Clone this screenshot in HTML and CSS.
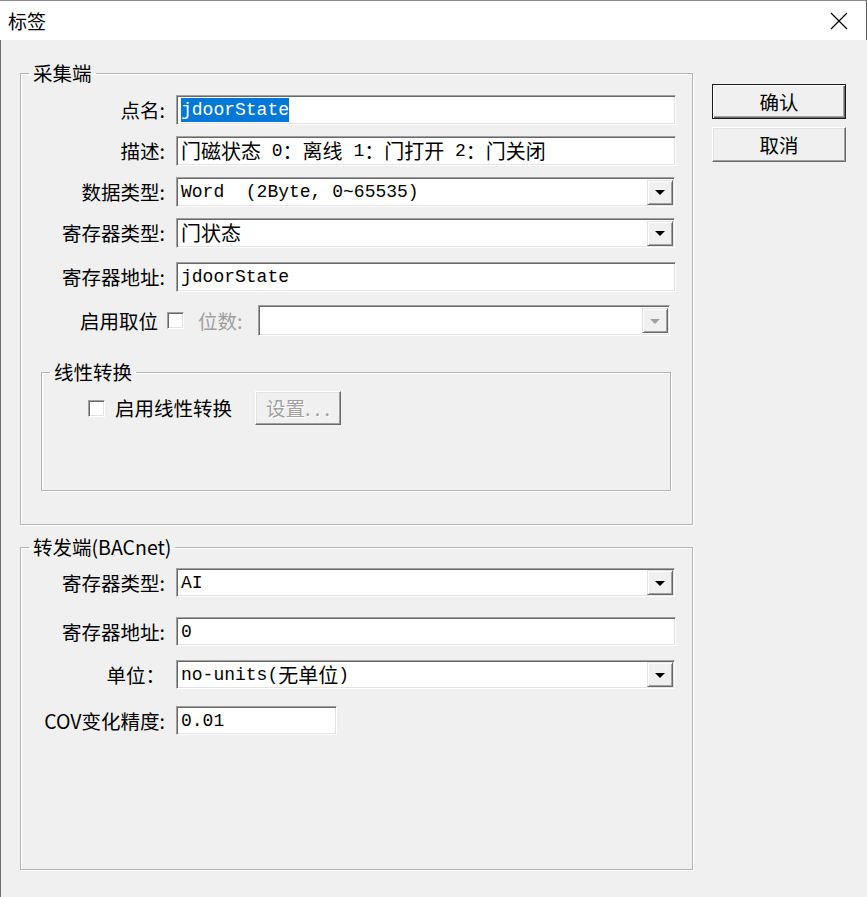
FILE: index.html
```html
<!DOCTYPE HTML>
<html>

<head>
    <meta charset="utf-8">
    <link rel="stylesheet" href="styles.css">
</head>

<body>
    <div class="titlebar">
        <span class="title">标签</span>
        <svg class="close" width="18" height="18" viewBox="0 0 18 18">
            <path d="M1 1 L17 17 M17 1 L1 17" stroke="#000" stroke-width="1.2" fill="none" />
        </svg>
    </div>

    <div class="client">
        <div class="groups">
            <fieldset class="group group-collect">
                <legend>采集端</legend>
                <div class="rows">
                    <div class="row">
                        <span class="lbl">点名:</span>
                        <div class="edit"><span class="sel">jdoorState</span></div>
                    </div>
                    <div class="row">
                        <span class="lbl">描述:</span>
                        <div class="edit"><span class="cjk">门磁状态</span> 0<span class="cjk">：离线</span> 1<span class="cjk">：门打开</span> 2<span class="cjk">：门关闭</span></div>
                    </div>
                    <div class="row">
                        <span class="lbl">数据类型:</span>
                        <div class="edit combo">Word&nbsp;&nbsp;(2Byte, 0~65535)<span class="drop"><i></i></span></div>
                    </div>
                    <div class="row">
                        <span class="lbl">寄存器类型:</span>
                        <div class="edit combo"><span class="cjk">门状态</span><span class="drop"><i></i></span></div>
                    </div>
                    <div class="row row-addr">
                        <span class="lbl">寄存器地址:</span>
                        <div class="edit">jdoorState</div>
                    </div>
                    <div class="row row-bits">
                        <span class="bits-lbl">启用取位</span>
                        <span class="check"></span>
                        <span class="muted bits-num">位数:</span>
                        <div class="edit combo bits-combo"><span class="drop drop-off"><i></i></span></div>
                    </div>
                </div>

                <fieldset class="group group-linear">
                    <legend>线性转换</legend>
                    <div class="linear-row">
                        <span class="check"></span>
                        <span class="linear-lbl">启用线性转换</span>
                        <span class="btn btn-off">设置. . .</span>
                    </div>
                </fieldset>
            </fieldset>

            <fieldset class="group group-forward">
                <legend>转发端(BACnet)</legend>
                <div class="rows rows-forward">
                    <div class="row">
                        <span class="lbl">寄存器类型:</span>
                        <div class="edit combo">AI<span class="drop"><i></i></span></div>
                    </div>
                    <div class="row row-addr2">
                        <span class="lbl">寄存器地址:</span>
                        <div class="edit">0</div>
                    </div>
                    <div class="row">
                        <span class="lbl">单位：</span>
                        <div class="edit combo">no-units(<span class="cjk">无单位</span>)<span class="drop"><i></i></span></div>
                    </div>
                    <div class="row">
                        <span class="lbl">COV变化精度:</span>
                        <div class="edit edit-short">0.01</div>
                    </div>
                </div>
            </fieldset>
        </div>

        <div class="actions">
            <span class="btn btn-default">确认</span>
            <span class="btn">取消</span>
        </div>
    </div>
</body>

</html>
```

FILE: styles.css
```css
html, body {
    margin: 0;
    padding: 0;
}
body {
    width: 867px;
    height: 897px;
    overflow: hidden;
    background: #f0f0f0;
    font-family: "Noto Sans CJK SC", sans-serif;
    font-size: 19.5px;
    color: #000;
}

/* title bar */
.titlebar {
    height: 40px;
    box-sizing: border-box;
    background: #fff;
    display: flex;
    align-items: center;
    justify-content: space-between;
    padding: 0 18px 0 8px;
    border-top: 1px solid #8a8a8a;
    border-right: 1px solid #5a5a5a;
}
.title {
    font-size: 19px;
    line-height: 24px;
}
.close {
    display: block;
}

/* dialog body */
.client {
    display: flex;
    height: 857px;
    box-sizing: border-box;
    padding: 21px 0 0 19px;
    border-left: 1px solid #6d6d6d;
    gap: 19px;
}
.groups {
    display: flex;
    flex-direction: column;
    gap: 10px;
}

.group {
    margin: 0;
    padding: 0;
    border: 1px solid #b4b4b4;
    box-shadow: 1px 1px 0 #fff, inset 1px 1px 0 #fff;
    box-sizing: border-box;
    min-width: 0;
}
.group legend {
    margin-left: 8px;
    padding: 0 4px;
    line-height: 24px;
}
.group-collect {
    width: 673px;
    height: 464px;
}
.group-forward {
    width: 673px;
    height: 335px;
}

.rows {
    display: flex;
    flex-direction: column;
    gap: 11px;
    padding-top: 10px;
}
.rows-forward {
    gap: 17px;
    padding-top: 9px;
}
.rows-forward .row {
    height: 29px;
}
.row {
    display: flex;
    align-items: center;
    height: 30px;
}
.row-addr {
    margin-top: 3px;
}
.row-addr2 {
    margin-top: 3px;
    margin-bottom: -3px;
}
.row-bits {
    margin-top: 2px;
    height: 31px;
    padding-left: 59px;
}
.lbl {
    width: 144px;
    margin-right: 11px;
    text-align: right;
    line-height: 24px;
    white-space: nowrap;
}

/* sunken edit / combo boxes */
.edit {
    flex: none;
    box-sizing: border-box;
    width: 500px;
    height: 100%;
    background: #fff;
    border-top: 1px solid #a0a0a0;
    border-left: 1px solid #a0a0a0;
    border-right: 1px solid #fff;
    border-bottom: 1px solid #fff;
    box-shadow: inset 1px 1px 0 #696969, inset -1px -1px 0 #e3e3e3;
    padding-left: 4px;
    display: flex;
    align-items: center;
    white-space: pre;
    font-family: "Liberation Mono", "Noto Sans CJK SC", monospace;
    font-size: 18px;
    line-height: 22px;
}
.cjk {
    font-family: "Noto Sans CJK SC", sans-serif;
    font-size: 20px;
}
.combo {
    width: 499px;
    padding-right: 1px;
}
.edit-short {
    width: 161px;
}
.sel {
    background: #0078d7;
    color: #fff;
    padding: 1px 0;
}
.drop {
    margin-left: auto;
    width: 26px;
    height: 25px;
    box-sizing: border-box;
    background: #f0f0f0;
    border-top: 1px solid #e3e3e3;
    border-left: 1px solid #e3e3e3;
    border-right: 1px solid #696969;
    border-bottom: 1px solid #696969;
    box-shadow: inset 1px 1px 0 #fff, inset -1px -1px 0 #a0a0a0;
    display: flex;
    align-items: center;
    justify-content: center;
}
.drop i {
    width: 0;
    height: 0;
    border-left: 5px solid transparent;
    border-right: 5px solid transparent;
    border-top: 5px solid #000;
    margin-top: 1px;
}
.drop-off i {
    border-top-color: #a0a0a0;
}

/* bit selection row */
.bits-lbl {
    line-height: 24px;
    white-space: nowrap;
}
.bits-num {
    margin: 0 16px 0 14px;
    white-space: nowrap;
}
.bits-combo {
    width: 412px;
}
.muted {
    color: #a0a0a0;
    line-height: 24px;
}

.check {
    width: 17px;
    height: 17px;
    box-sizing: border-box;
    background: #fff;
    border-top: 1px solid #a0a0a0;
    border-left: 1px solid #a0a0a0;
    border-right: 1px solid #fff;
    border-bottom: 1px solid #fff;
    box-shadow: inset 1px 1px 0 #696969, inset -1px -1px 0 #e3e3e3;
    flex: none;
}
.row-bits .check {
    margin-left: 9px;
}

/* linear conversion box */
.group-linear {
    width: 630px;
    height: 131px;
    margin: 24px 0 0 20px;
}
.linear-row {
    display: flex;
    align-items: center;
    height: 34px;
    margin-top: 7px;
    padding-left: 46px;
}
.linear-lbl {
    margin: 0 23px 0 10px;
    line-height: 24px;
    white-space: nowrap;
}

/* push buttons */
.actions {
    display: flex;
    flex-direction: column;
    gap: 8px;
    margin-top: 23px;
}
.btn {
    width: 134px;
    height: 35px;
    box-sizing: border-box;
    background: #f0f0f0;
    border-top: 1px solid #fff;
    border-left: 1px solid #fff;
    border-right: 1px solid #696969;
    border-bottom: 1px solid #696969;
    box-shadow: inset -1px -1px 0 #a0a0a0, inset 1px 1px 0 #e3e3e3;
    display: flex;
    align-items: center;
    justify-content: center;
    line-height: 24px;
}
.btn-default {
    border: 1px solid #1a1a1a;
    box-shadow: inset 1px 1px 0 #fff, inset -1px -1px 0 #696969, inset -2px -2px 0 #a0a0a0;
}
.btn-off {
    width: 86px;
    height: 34px;
    flex: none;
    white-space: nowrap;
    color: #a0a0a0;
    text-shadow: 1px 1px 0 #fff;
}
```
